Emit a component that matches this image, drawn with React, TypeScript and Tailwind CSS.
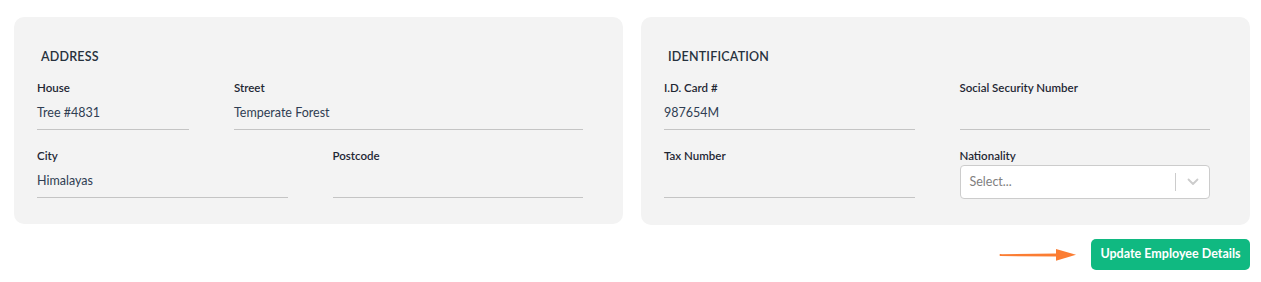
import React from 'react';

type Field = { label: string; value?: string };

function LineField({ label, value }: Field) {
    return (
        <div className="flex flex-col">
            <label className="h-4 text-[11.5px] leading-4 font-semibold text-[#1f2733]">{label}</label>
            <div className="pt-[7px] pb-[6px] border-b border-[#c4c4c4] text-[12.5px] leading-5 text-[#2f3d52] h-[34px]">
                {value}
            </div>
        </div>
    );
}

function SelectField({ label }: { label: string }) {
    return (
        <div className="flex flex-col">
            <label className="h-4 text-[11.5px] leading-4 font-semibold text-[#1f2733]">{label}</label>
            <div className="mt-px h-[34px] flex items-center bg-white border border-[#cccccc] rounded-[4px]">
                <span className="flex-1 pl-[9px] text-[12.5px] text-[#808080]">Select...</span>
                <span className="w-px h-[18px] bg-[#cccccc]" />
                <span className="w-[33px] flex justify-center">
                    <svg width="12" height="8" viewBox="0 0 12 8" fill="none">
                        <path d="M1.5 1.5 6 6l4.5-4.5" stroke="#cccccc" strokeWidth="1.8" strokeLinecap="round" strokeLinejoin="round" />
                    </svg>
                </span>
            </div>
        </div>
    );
}

function Card({ title, children }: { title: string; children: React.ReactNode }) {
    return (
        <section className="bg-[#f3f3f3] rounded-[10px] pt-[30px] pb-[26px] pl-[23px] pr-[40px]">
            <h2 className="pl-1 mb-[13px] text-[12.5px] leading-5 font-semibold tracking-[0.2px] text-[#27313d]">{title}</h2>
            {children}
        </section>
    );
}

export default function App() {
    return (
        <div
            className="w-[1261px] h-[282px] bg-white pt-[17px] pl-[14px] pr-[11px]"
            style={{ fontFamily: 'Lato, "Noto Sans", sans-serif' }}
        >
            <div className="grid grid-cols-2 gap-x-[18px] items-start">
                <Card title="ADDRESS">
                    <div className="grid grid-cols-[152px_1fr] gap-x-[45px]">
                        <LineField label="House" value="Tree #4831" />
                        <LineField label="Street" value="Temperate Forest" />
                    </div>
                    <div className="grid grid-cols-2 gap-x-[45px] mt-[18px]">
                        <LineField label="City" value="Himalayas" />
                        <LineField label="Postcode" />
                    </div>
                </Card>
                <Card title="IDENTIFICATION">
                    <div className="grid grid-cols-2 gap-x-[45px] gap-y-[18px]">
                        <LineField label="I.D. Card #" value="987654M" />
                        <LineField label="Social Security Number" />
                        <LineField label="Tax Number" />
                        <SelectField label="Nationality" />
                    </div>
                </Card>
            </div>
            <div className="flex justify-end items-center gap-[14px] mt-[14px]">
                <svg width="78" height="12" viewBox="0 0 78 12">
                    <path d="M1 5.2 L58 4.5 L58 7.5 L1 7 Z" fill="#fb7d33" />
                    <circle cx="1.5" cy="6.1" r="1" fill="#fb7d33" />
                    <path d="M57 0 L77 5.8 L57 11.7 Z" fill="#fb7d33" />
                </svg>
                <button className="h-[31px] w-[159px] rounded-[5px] bg-[#10b981] text-white text-[12.5px] font-bold">
                    Update Employee Details
                </button>
            </div>
        </div>
    );
}
